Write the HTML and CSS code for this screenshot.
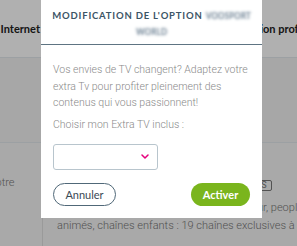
FILE: index.html
```html
<!DOCTYPE html>
<html lang="fr">
<head>
<meta charset="utf-8">
<title>Modification de l'option</title>
<link rel="stylesheet" href="styles.css">
</head>
<body>
<div class="page">
  <div class="table">
    <div class="cell head c1">TV + Internet</div>
    <div class="cell head c2"><span class="head-text">Option profil</span></div>
    <div class="cell row2 c1"></div>
    <div class="cell row2 c2"></div>
    <div class="cell row3 c1"><span class="label">Adaptez votre</span></div>
    <div class="cell row3 c2">
      <div class="badge-line"><span class="badge">OPTIONS</span></div>
      <p class="desc">Films, séries, sport, documentaires, humour, people, dessins<br>animés, chaînes enfants : 19 chaînes exclusives à savourer</p>
    </div>
  </div>
</div>
<div class="overlay"></div>
<div class="modal">
  <div class="modal-head">
    <h2 class="modal-title">MODIFICATION DE L'OPTION <span class="blurred">VOOSPORT<br>WORLD</span></h2>
  </div>
  <div class="modal-body">
    <p class="intro">Vos envies de TV changent? Adaptez votre extra Tv pour profiter pleinement des contenus qui vous passionnent!</p>
    <p class="choose">Choisir mon Extra TV inclus :</p>
    <div class="select">
      <svg class="chev" width="8" height="5" viewBox="0 0 8 5"><path d="M1 1 L4 4 L7 1" fill="none" stroke="#e5007d" stroke-width="1.5" stroke-linecap="round" stroke-linejoin="round"/></svg>
    </div>
    <div class="actions">
      <button class="btn btn-cancel">Annuler</button>
      <button class="btn btn-ok">Activer</button>
    </div>
  </div>
</div>
</body>
</html>
```
FILE: styles.css
```css
* { box-sizing: border-box; }
html, body { margin: 0; padding: 0; }
body {
  width: 297px;
  height: 246px;
  overflow: hidden;
  position: relative;
  background: #f5f5f5;
  font-family: Roboto, "Liberation Sans", sans-serif;
}
.page {
  margin-left: -62px;
  width: 440px;
}
.table {
  display: grid;
  grid-template-columns: 105px 1fr;
  grid-template-rows: 58px 85px 110px;
}
.cell { overflow: hidden; }
.head {
  background: #fff;
  font-family: Lato, "Liberation Sans", sans-serif;
  font-weight: 700;
  font-size: 11px;
  color: #222;
  display: flex;
  align-items: center;
  white-space: nowrap;
  border-bottom: 1px solid #e2e8ec;
}
.head.c1 { justify-content: flex-end; padding-right: 3px; }
.head.c2 { padding-left: 198px; }
.row2 { background: #f2f2f2; border-bottom: 1px solid #e2e8ec; }
.row3 { background: #f5f5f5; }
.c1.row3 { border-right: 1px solid #e0e0e0; padding: 28px 0 0 10px; }
.label { font-size: 11px; font-weight: 300; color: #777; white-space: nowrap; }
.row3.c2 { padding: 37px 0 0 14px; }
.badge-line { height: 11px; padding-left: 167px; display: flex; }
.badge {
  display: block;
  height: 11px;
  border: 1px solid #777;
  border-radius: 2px;
  font-size: 9px;
  line-height: 9px;
  padding: 0 4px;
  color: #777;
}
.desc {
  margin: 8px 0 0;
  font-size: 11px;
  font-weight: 300;
  line-height: 18px;
  color: #777;
  white-space: nowrap;
}
.overlay {
  position: absolute;
  inset: 0;
  background: rgba(0, 0, 0, 0.31);
}
.modal {
  position: absolute;
  left: 41px;
  top: 0;
  width: 221px;
  background: #fff;
}
.modal-head {
  padding: 7.5px 4px 4.5px;
  border-bottom: 1px solid #5e7482;
  text-align: center;
}
.modal-title {
  margin: 0;
  font-family: Lato, "Liberation Sans", sans-serif;
  font-weight: 700;
  font-size: 9.5px;
  line-height: 15px;
  letter-spacing: 0.8px;
  color: #3c5566;
  white-space: nowrap;
}
.blurred {
  color: transparent;
  font-size: 8.5px;
  letter-spacing: -0.2px;
  text-shadow: 0 0 3px rgba(110, 130, 148, 1);
}
.modal-body {
  padding: 17px 12px 12px;
}
.intro, .choose {
  margin: 0;
  font-size: 10.5px;
  font-weight: 300;
  line-height: 16.5px;
  color: #8a8a8a;
}
.choose { margin-top: 5.5px; }
.select {
  margin-top: 10px;
  width: 105px;
  height: 26px;
  border: 1px solid #b8c5cd;
  border-radius: 3px;
  display: flex;
  align-items: center;
  justify-content: flex-end;
  padding-right: 8px;
}
.chev { display: block; }
.actions {
  margin-top: 13px;
  display: flex;
  justify-content: space-between;
}
.btn {
  height: 23px;
  border-radius: 12px;
  font-size: 10.5px;
  padding: 0;
  cursor: pointer;
}
.btn-cancel {
  width: 63px;
  background: #fff;
  border: 1px solid #506878;
  color: #3a4a55;
  font-family: Lato, "Liberation Sans", sans-serif;
  font-weight: 400;
  font-size: 11px;
}
.btn-ok {
  width: 59px;
  background: #7ab51d;
  border: none;
  color: #fff;
  font-family: Lato, "Liberation Sans", sans-serif;
  font-weight: 700;
  font-size: 11px;
}
```
